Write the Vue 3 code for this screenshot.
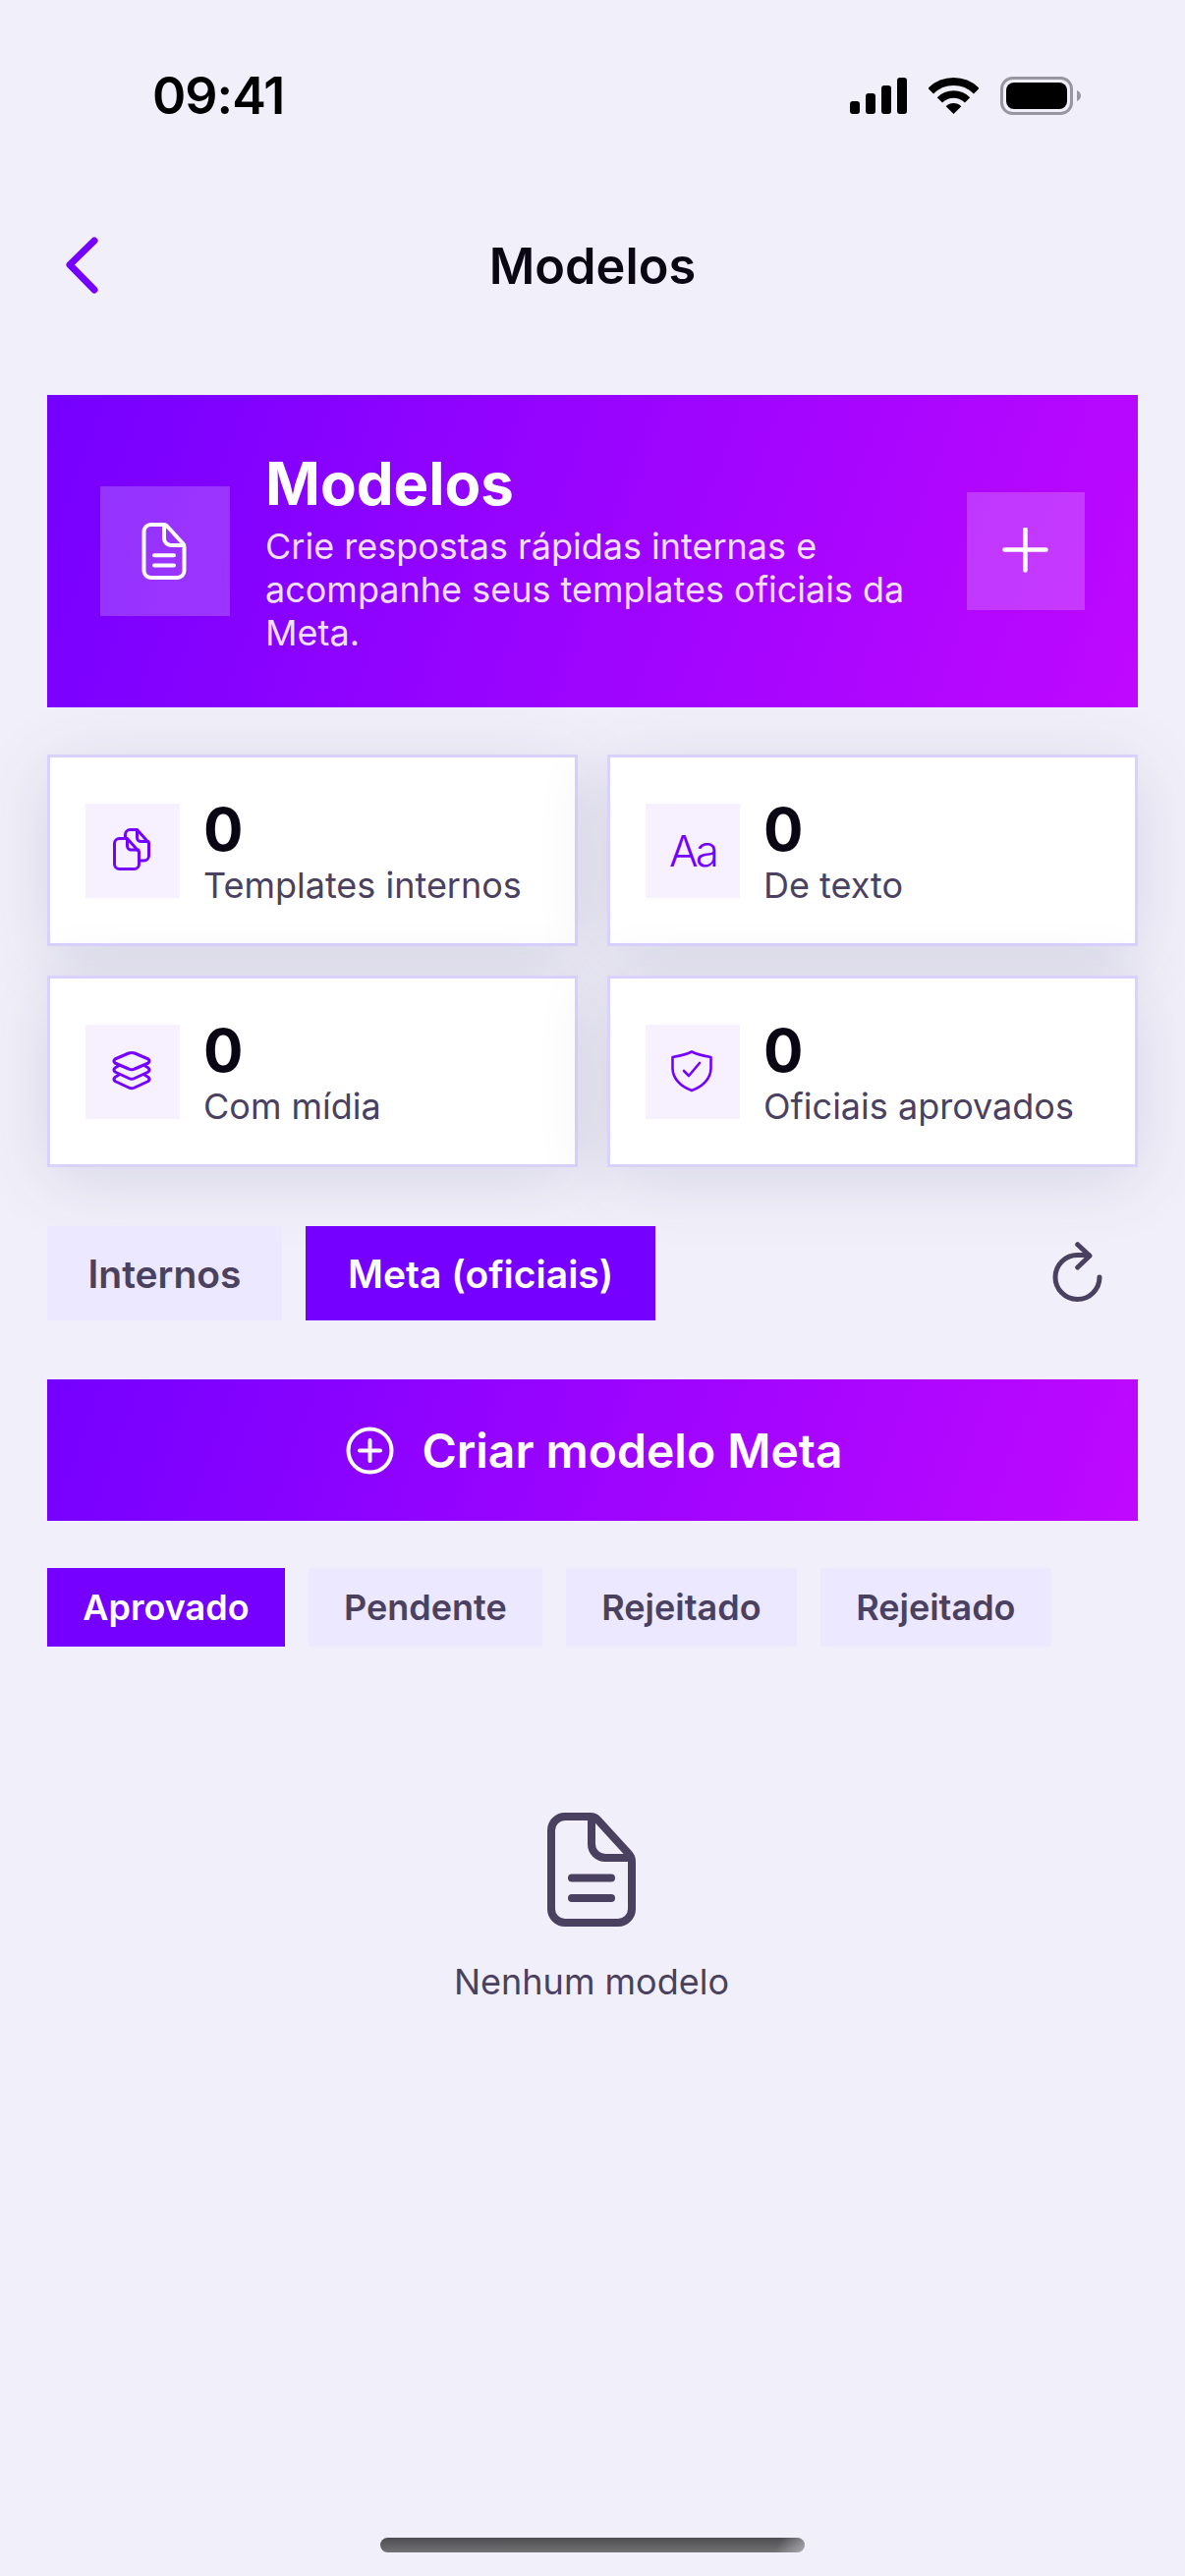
<script setup>
const stats = [
  { id: 'copy', value: 0, label: 'Templates internos' },
  { id: 'text', value: 0, label: 'De texto' },
  { id: 'layers', value: 0, label: 'Com mídia' },
  { id: 'shield', value: 0, label: 'Oficiais aprovados' }
]
const filters = ['Aprovado', 'Pendente', 'Rejeitado', 'Rejeitado']
</script>

<template>
  <div class="page">
    <div class="status">
      <span class="time">09:41</span>
      <div class="status-icons">
        <svg width="58" height="37" viewBox="0 0 58 37">
          <rect x="0" y="24" width="10" height="13" rx="3" />
          <rect x="16" y="16" width="10" height="21" rx="3" />
          <rect x="32" y="8" width="10" height="29" rx="3" />
          <rect x="48" y="0" width="10" height="37" rx="3" />
        </svg>
        <svg width="51" height="37" viewBox="0 0 51 37">
          <path d="M2.2 13.7A33 33 0 0 1 48.8 13.7" fill="none" stroke="#000" stroke-width="8" />
          <path d="M11.4 22.9A20 20 0 0 1 39.6 22.9" fill="none" stroke="#000" stroke-width="7.5" />
          <path d="M25.5 37L17.7 29.2A11 11 0 0 1 33.3 29.2Z" />
        </svg>
        <svg width="82" height="39" viewBox="0 0 82 39">
          <rect x="1.5" y="1.5" width="71" height="36" rx="11" fill="none" stroke="#98969f" stroke-width="3" />
          <rect x="6" y="6" width="62" height="27" rx="8" />
          <path d="M78 14C80.500 15 82 17 82 19.500C82 22 80.500 24 78 25Z" fill="#98969f" />
        </svg>
      </div>
    </div>

    <div class="nav">
      <svg class="back" width="36" height="60" viewBox="0 0 36 60">
        <path d="M30 5L5 29.500L30 55" fill="none" stroke="#7500ff" stroke-width="7" stroke-linecap="round" stroke-linejoin="round" />
      </svg>
      <span class="nav-title">Modelos</span>
    </div>

    <div class="hero">
      <div class="hero-icon">
        <svg width="46" height="58" viewBox="0 0 90 116" fill="none" stroke="#fff" stroke-width="8" stroke-linecap="round" stroke-linejoin="round">
          <path d="M18 4H44Q48 4 51 7L83 42Q86 45 86 50V98A14 14 0 0 1 72 112H18A14 14 0 0 1 4 98V18A14 14 0 0 1 18 4Z" />
          <path d="M45 5V32A14 14 0 0 0 59 46H85M25 66.500H65M25 87H65" />
        </svg>
      </div>
      <div class="hero-text">
        <h1>Modelos</h1>
        <p>Crie respostas rápidas internas e acompanhe seus templates oficiais da Meta.</p>
      </div>
      <div class="hero-add">
        <svg width="48" height="48" viewBox="0 0 48 48" fill="none" stroke="#fff" stroke-width="4.500" stroke-linecap="round">
          <path d="M23.500 1.500V43.500M2.500 22.500H44.500" />
        </svg>
      </div>
    </div>

    <div class="stats">
      <div v-for="s in stats" :key="s.label" class="card">
        <div class="card-icon">
          <span v-if="s.id === 'text'" class="aa">Aa</span>
          <svg v-else width="96" height="96" viewBox="-3 -2 96 96" fill="none" stroke="#7500ff" stroke-width="3" stroke-linecap="round" stroke-linejoin="round">
            <template v-if="s.id === 'copy'">
              <path d="M32 33.500H39.500L51.500 47V59.500A5 5 0 0 1 46.500 64.500H31.500A5 5 0 0 1 26.500 59.500V38.500A5 5 0 0 1 31.500 33.500Z" />
              <path d="M39.500 34V41A4 4 0 0 0 43.500 45H51" />
              <path d="M37.500 33V29.500A5 5 0 0 1 42.500 24.500H49.500L61.500 38V51A5 5 0 0 1 56.500 56H52" />
              <path d="M49.500 25V32.500A4 4 0 0 0 53.500 36.500H61" />
            </template>
            <template v-else-if="s.id === 'layers'">
              <path d="M27 33L41 27Q44 26 47 27L61 33Q63 35 61 37L47 43Q44 44.500 41 43L27 37Q25 35 27 33Z" />
              <path d="M31 39.500L27 42Q25 44 27 46L41 52.500Q44 54 47 52.500L61 46Q63 44 61 42L57 39.500" />
              <path d="M31 49L27 51.500Q25 53.500 27 55.500L41 62Q44 63.500 47 62L61 55.500Q63 53.500 61 51.500L57 49" />
            </template>
            <g v-else transform="translate(-3 -2)" stroke-width="2.600">
              <path d="M47 27.500C52 30 60 32 66.500 33V44C66.500 55 58 63 47 67C36 63 27.500 55 27.500 44V33C34 32 42 30 47 27.500Z" />
              <path d="M39 47L44 52L55 39" />
            </g>
          </svg>
        </div>
        <div class="card-text">
          <span class="card-value">{{ s.value }}</span>
          <span class="card-label">{{ s.label }}</span>
        </div>
      </div>
    </div>

    <div class="tabs">
      <div class="tab first">Internos</div>
      <div class="tab active">Meta (oficiais)</div>
      <svg class="refresh" width="90" height="96" viewBox="0 0 90 96" fill="none" stroke="#4a4060" stroke-width="5" stroke-linecap="round" stroke-linejoin="round">
        <path d="M69 52A22.500 22.500 0 1 1 46.700 29.500H58" />
        <path d="M46.700 18.700L59 30.300L46.700 42" />
      </svg>
    </div>

    <div class="cta">
      <svg width="49" height="49" viewBox="0 0 49 49" fill="none" stroke="#fff" stroke-width="4" stroke-linecap="round">
        <circle cx="24.500" cy="24.500" r="22" />
        <path d="M24.500 14V35M14 24.500H35" />
      </svg>
      <span>Criar modelo Meta</span>
    </div>

    <div class="filters">
      <div v-for="(f, i) in filters" :key="i" class="chip" :class="{ active: i === 0 }">{{ f }}</div>
    </div>

    <div class="empty">
      <svg width="90" height="116" viewBox="0 0 90 116" fill="none" stroke="#4a4060" stroke-width="8" stroke-linecap="round" stroke-linejoin="round">
        <path d="M18 4H44Q48 4 51 7L83 42Q86 45 86 50V98A14 14 0 0 1 72 112H18A14 14 0 0 1 4 98V18A14 14 0 0 1 18 4Z" />
        <path d="M45 5V32A14 14 0 0 0 59 46H85M25 66.500H65M25 87H65" />
      </svg>
      <span>Nenhum modelo</span>
    </div>

    <div class="home-bar"></div>
  </div>
</template>

<style scoped>
.page {
  min-height: 2622px;
  display: flex;
  flex-direction: column;
  padding: 0 48px;
  box-sizing: border-box;
  background: #f1f0fa;
  font-family: Inter, "Noto Sans", sans-serif;
  color: #0a0614;
}

.status {
  display: flex;
  justify-content: space-between;
  align-items: center;
  height: 39px;
  padding: 78px 58px 0 107px;
}

.time {
  font-size: 52px;
  font-weight: 600;
  letter-spacing: -1px;
  color: #000;
  line-height: 39px;
}

.status-icons {
  display: flex;
  align-items: center;
  gap: 22px;
}

.nav {
  display: grid;
  grid-template-columns: 1fr auto 1fr;
  align-items: center;
  height: 96px;
  margin-top: 105px;
}

.back {
  margin-left: 18px;
}

.nav-title {
  font-size: 50.500px;
  font-weight: 600;
}

.hero {
  display: flex;
  align-items: center;
  height: 318px;
  margin-top: 84px;
  padding: 0 54px;
  box-sizing: border-box;
  background: linear-gradient(110deg, #7500ff, #bf08ff);
  color: #fff;
}

.hero-icon {
  display: flex;
  align-items: center;
  justify-content: center;
  flex: none;
  width: 132px;
  height: 132px;
  padding-right: 2px;
  box-sizing: border-box;
  background: rgba(255, 255, 255, 0.2);
}

.hero-text {
  flex: 1;
  margin: 0 50px 0 36px;
}

.hero-text h1 {
  margin: 0 0 6px;
  font-size: 60px;
  font-weight: 700;
  line-height: 72px;
}

.hero-text p {
  margin: 0;
  font-size: 36px;
  line-height: 44px;
  color: rgba(255, 255, 255, 0.88);
}

.hero-add {
  display: flex;
  align-items: center;
  justify-content: center;
  flex: none;
  width: 120px;
  height: 120px;
  background: rgba(255, 255, 255, 0.2);
}

.stats {
  display: grid;
  grid-template-columns: 1fr 1fr;
  gap: 30px;
  margin-top: 48px;
}

.card {
  display: flex;
  align-items: center;
  gap: 24px;
  height: 195px;
  padding: 0 36px;
  box-sizing: border-box;
  background: #fff;
  border: 3px solid #d9d2ff;
  box-shadow: 0 12px 72px rgba(40, 30, 80, 0.13);
}

.card-icon {
  display: flex;
  align-items: center;
  justify-content: center;
  flex: none;
  width: 96px;
  height: 96px;
  background: #f6f0ff;
}

.aa {
  font-size: 44px;
  font-weight: 300;
  letter-spacing: -3px;
  color: #7500ff;
}

.card-text {
  display: flex;
  flex-direction: column;
  padding-top: 3px;
}

.card-value {
  font-size: 60px;
  font-weight: 700;
  line-height: 64px;
}

.card-label {
  margin-top: 3px;
  font-size: 36px;
  line-height: 44px;
  color: #4a4060;
}

.tabs {
  display: flex;
  align-items: center;
  gap: 24px;
  margin-top: 60px;
}

.tab {
  display: flex;
  align-items: center;
  height: 96px;
  padding: 0 43px;
  background: #ece8ff;
  font-size: 39px;
  font-weight: 600;
  color: #4a4060;
}

.tab.first {
  padding: 0 41.500px;
}

.tab.active {
  background: #7500ff;
  color: #fff;
}

.refresh {
  margin-left: auto;
  margin-right: 18px;
}

.cta {
  display: flex;
  align-items: center;
  justify-content: center;
  gap: 28px;
  height: 144px;
  margin-top: 60px;
  padding-left: 4px;
  background: linear-gradient(110deg, #7500ff, #bf08ff);
  color: #fff;
  font-size: 48px;
  font-weight: 600;
}

.filters {
  display: flex;
  gap: 24px;
  margin-top: 48px;
}

.chip {
  display: flex;
  align-items: center;
  height: 80px;
  padding: 0 36.250px;
  background: #ece8ff;
  font-size: 36px;
  font-weight: 600;
  color: #4a4060;
}

.chip.active {
  background: #7500ff;
  color: #fff;
}

.empty {
  display: flex;
  flex-direction: column;
  align-items: center;
  gap: 34px;
  margin-top: 169px;
  padding-right: 2px;
  font-size: 36px;
  color: #4a4060;
}

.home-bar {
  align-self: center;
  width: 432px;
  height: 15px;
  margin-top: auto;
  margin-bottom: 24px;
  border-radius: 8px;
  background: linear-gradient(115deg, transparent 93%, rgba(241, 240, 250, 0.45)), linear-gradient(180deg, #4d4d50, #727276);
}
</style>

<style>
body {
  background: #f1f0fa;
}
</style>
